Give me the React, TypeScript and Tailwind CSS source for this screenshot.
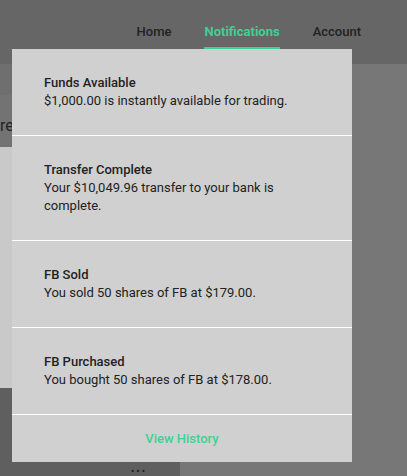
import { useState } from 'react'

const ITEMS = [
  { title: 'Funds Available', body: '$1,000.00 is instantly available for trading.' },
  { title: 'Transfer Complete', body: 'Your $10,049.96 transfer to your bank is complete.' },
  { title: 'FB Sold', body: 'You sold 50 shares of FB at $179.00.' },
  { title: 'FB Purchased', body: 'You bought 50 shares of FB at $178.00.' },
]

const NAV = ['Home', 'Notifications', 'Account']

export default function App() {
  const [active] = useState('Notifications')

  return (
    <div className="relative w-[407px] h-[476px] overflow-hidden bg-[#777] font-['Roboto',sans-serif] text-[13px]">
      <header className="h-16 bg-[#666] flex items-start justify-end pr-[46px] pt-[24px] gap-[33px]">
        {NAV.map(n => (
          <a
            key={n}
            className={`relative leading-[16px] ${
              n === active ? 'font-bold text-[#3fd095]' : 'font-medium text-[#222]'
            }`}
          >
            {n}
            {n === active && <span className="absolute left-0 right-0 top-[23px] h-[3px] bg-[#3fd095]" />}
          </a>
        ))}
      </header>

      <div className="flex flex-col">
        <div className="h-[31px] w-[40px] bg-[#6f6f6f]" />
        <div className="h-[52px] w-[40px] bg-[#737373] flex items-end pb-[12px] text-[16px] leading-[18px] text-[#222]">re</div>
        <div className="h-[241px] w-[40px] bg-[#c9c9c9]" />
        <div className="h-[88px] w-[180px] bg-[#5f5f5f] flex items-end pl-[131px] text-[#222] text-[10px] leading-[8px] tracking-[2px]">•••</div>
      </div>

      <div className="absolute left-[12px] top-[49px] w-[340px] bg-[#d0d0d0] text-[#222]">
        {ITEMS.map((it, i) => (
          <div key={it.title} className={`px-[32px] pt-[25px] pb-[25px] leading-[18px] ${i > 0 ? 'border-t border-white' : ''}`}>
            <div className="font-medium">{it.title}</div>
            <div>{it.body}</div>
          </div>
        ))}
        <div className="border-t border-white h-[48px] flex items-center justify-center font-medium text-[#3fd095]">
          View History
        </div>
      </div>
    </div>
  )
}
